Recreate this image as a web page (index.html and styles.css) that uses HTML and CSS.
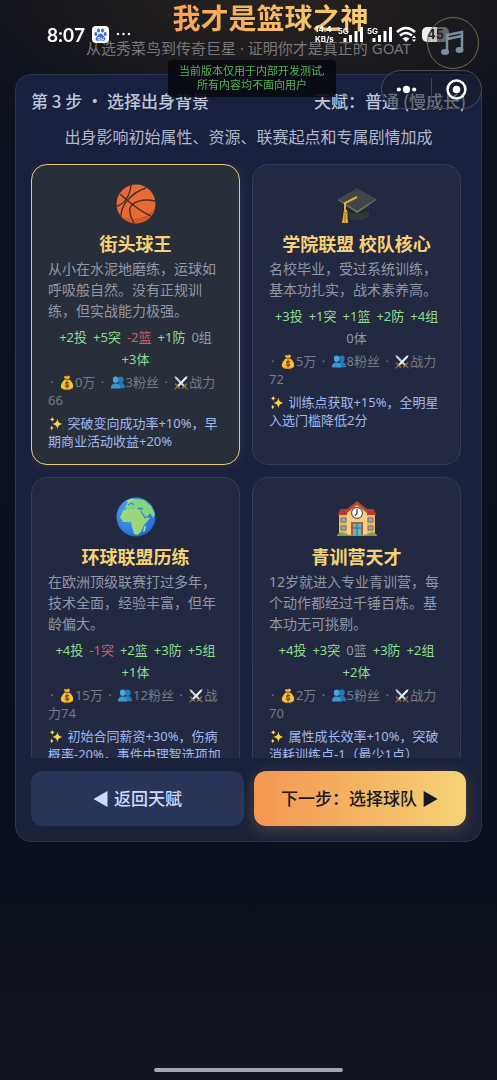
FILE: index.html
```
<!DOCTYPE html>
<html lang="zh-CN">
<head>
    <meta charset="UTF-8">
    <meta name="viewport" content="width=device-width, initial-scale=1.0">
    <title>我才是篮球之神</title>
    <link rel="stylesheet" href="styles.css">
</head>
<body>
    <!-- Shared icons -->
    <svg class="sprite" aria-hidden="true">
        <symbol id="i-money" viewBox="0 0 32 32">
            <path d="M13 9C9 5 9 3 11 2l4 1 4-2 3 2c1 2-1 4-3 6z" fill="#fbb52c"/>
            <path d="M12 9h8c6 4 10 10 9 16-1 5-6 6-13 6S3 30 3 24C3 18 7 13 12 9z" fill="#fcc234"/>
            <path d="M4 26c2 5 20 5 25-1-1 5-6 6-13 6S5 30 4 26z" fill="#e8931c"/>
            <path d="M11 9l10 1" stroke="#8f5b22" stroke-width="2.5" stroke-linecap="round"/>
            <path d="M20 17c-2-2-7-2-7 1s7 2 7 5-6 3-8 0M16 13v15" fill="none" stroke="#69451f" stroke-width="2.2" stroke-linecap="round"/>
        </symbol>
        <symbol id="i-people" viewBox="0 0 32 32">
            <ellipse cx="22" cy="10" rx="6" ry="7" fill="#2579b5"/>
            <path d="M13 28c0-8 3-11 9-11s9 4 9 11z" fill="#2579b5"/>
            <ellipse cx="11" cy="10" rx="6" ry="7" fill="#4aa5df"/>
            <path d="M1 29c0-8 3-11 10-11s10 4 10 11z" fill="#3c96d1"/>
        </symbol>
        <symbol id="i-swords" viewBox="0 0 32 32">
            <path d="M2 2l5 2 19 20-3 3L4 8z" fill="#b9d3dc"/>
            <path d="M30 2l-5 2L6 24l3 3L28 8z" fill="#e5f1f4"/>
            <path d="M4 19l9 9M28 19l-9 9" stroke="#a97c3d" stroke-width="2.5" stroke-linecap="round"/>
            <path d="M8 25l-5 5M24 25l5 5" stroke="#8c6035" stroke-width="3" stroke-linecap="round"/>
        </symbol>
        <symbol id="i-sparkles" viewBox="0 0 32 32">
            <path d="M19 5c1 8 3 10 11 12-8 2-10 4-11 12-1-8-3-10-11-12 8-2 10-4 11-12z" fill="#fdd33c"/>
            <path d="M8 1c.5 4 2 5 6 6-4 1-5.500 2-6 6-.5-4-2-5-6-6 4-1 5.500-2 6-6zM7 20c.5 3 2 5 5 5-3 1-4.500 2-5 6-.5-4-2-5-5-6 3 0 4.500-2 5-5z" fill="#fddd5c"/>
        </symbol>
    </svg>

    <div id="app">
        <header class="page-header">
            <h1>我才是篮球之神</h1>
            <p>从选秀菜鸟到传奇巨星 · 证明你才是真正的 GOAT</p>
        </header>

        <main class="panel">
            <div class="panel-head">
                <h2>第 3 步 · 选择出身背景</h2>
                <span>天赋：普通 (慢成长)</span>
            </div>
            <p class="panel-tip">出身影响初始属性、资源、联赛起点和专属剧情加成</p>

            <div class="card-scroll">
                <button type="button" class="card selected" aria-pressed="true">
                    <svg class="card-icon" viewBox="0 0 40 40" aria-hidden="true">
                        <circle cx="20" cy="20" r="19.500" fill="#e76b35"/>
                        <path d="M5 32a19.500 19.500 0 0 0 34-9C32 34 17 38 5 32z" fill="#d35727"/>
                        <g fill="none" stroke="#43302b" stroke-width="1.400">
                            <path d="M4 10c9 8 19 17 31 22M15 1C14 11 9 20 1 22M30 4C17 8 5 20 5 32M39 17c-12-3-23 1-25 7-1 5 1 10 4 15"/>
                        </g>
                    </svg>
                    <span class="card-name">街头球王</span>
                    <span class="card-desc">从小在水泥地磨练，运球如呼吸般自然。没有正规训练，但实战能力极强。</span>
                    <span class="card-stats">
                        <span class="up">+2投</span> <span class="up">+5突</span> <span class="down">-2篮</span> <span class="up">+1防</span> <span>0组</span> <span class="up">+3体</span>
                    </span>
                    <span class="card-meta"><span class="dot">·</span> <svg class="emoji"><use href="#i-money"/></svg>0万 <span class="dot">·</span> <svg class="emoji"><use href="#i-people"/></svg>3粉丝 <span class="dot">·</span> <svg class="emoji"><use href="#i-swords"/></svg>战力66</span>
                    <span class="card-perk"><svg class="emoji"><use href="#i-sparkles"/></svg> 突破变向成功率+10%，早期商业活动收益+20%</span>
                </button>

                <button type="button" class="card" aria-pressed="false">
                    <svg class="card-icon" viewBox="0 0 40 40" aria-hidden="true">
                        <path d="M10 22v10c5 6 16 6 22 0V18z" fill="#30363a"/>
                        <path d="M10 22c5 5 16 7 22 0v4c-5 5-16 4-22 1z" fill="#222a2e"/>
                        <path d="M1 15L20 4l19 11-19 13z" fill="#414545"/>
                        <path d="M1 15l19 12 19-12v1L20 29 1 16z" fill="#74787a"/>
                        <path d="M20 13L8 19v12" fill="none" stroke="#e6ae32" stroke-width="2"/>
                        <path d="M7 26h3l1 13H5z" fill="#e8ad32"/>
                        <path d="M6 29h5M8 31v8" stroke="#a66d1d"/>
                    </svg>
                    <span class="card-name">学院联盟 校队核心</span>
                    <span class="card-desc">名校毕业，受过系统训练，基本功扎实，战术素养高。</span>
                    <span class="card-stats">
                        <span class="up">+3投</span> <span class="up">+1突</span> <span class="up">+1篮</span> <span class="up">+2防</span> <span class="up">+4组</span> <span>0体</span>
                    </span>
                    <span class="card-meta"><span class="dot">·</span> <svg class="emoji"><use href="#i-money"/></svg>5万 <span class="dot">·</span> <svg class="emoji"><use href="#i-people"/></svg>8粉丝 <span class="dot">·</span> <svg class="emoji"><use href="#i-swords"/></svg>战力72</span>
                    <span class="card-perk"><svg class="emoji"><use href="#i-sparkles"/></svg> 训练点获取+15%，全明星入选门槛降低2分</span>
                </button>

                <button type="button" class="card" aria-pressed="false">
                    <svg class="card-icon" viewBox="0 0 40 40" aria-hidden="true">
                        <defs>
                            <radialGradient id="sea" cx=".4" cy=".35" r=".7">
                                <stop offset="0" stop-color="#58b5f4"/>
                                <stop offset="1" stop-color="#2264d4"/>
                            </radialGradient>
                        </defs>
                        <circle cx="20" cy="20" r="19.500" fill="url(#sea)"/>
                        <path d="M7 14l5-3 8 1 7 2 3 6 4 1-6 7-3 7-4 3-3-1-2-7-1-5-8 0-3-5z" fill="#9bd77a"/>
                        <path d="M9 10l3-5 7-3 9 1 7 6 4 8-2 4-3-5-3 4-4-4-3-4-5 1-2-3-4 3z" fill="#86d47e"/>
                        <path d="M12 8l4-2 2 2M22 11l5 1M25 14l4 7 4-2" fill="none" stroke="#3b87d9" stroke-width="1.300"/>
                        <path d="M28 30l2-2-1 6-2 1zM10 4l5-2 4 0-6 3z" fill="#a9e29b"/>
                    </svg>
                    <span class="card-name">环球联盟历练</span>
                    <span class="card-desc">在欧洲顶级联赛打过多年，技术全面，经验丰富，但年龄偏大。</span>
                    <span class="card-stats">
                        <span class="up">+4投</span> <span class="down">-1突</span> <span class="up">+2篮</span> <span class="up">+3防</span> <span class="up">+5组</span> <span class="up">+1体</span>
                    </span>
                    <span class="card-meta"><span class="dot">·</span> <svg class="emoji"><use href="#i-money"/></svg>15万 <span class="dot">·</span> <svg class="emoji"><use href="#i-people"/></svg>12粉丝 <span class="dot">·</span> <svg class="emoji"><use href="#i-swords"/></svg>战力74</span>
                    <span class="card-perk"><svg class="emoji"><use href="#i-sparkles"/></svg> 初始合同薪资+30%，伤病概率-20%，事件中理智选项加成</span>
                </button>

                <button type="button" class="card" aria-pressed="false">
                    <svg class="card-icon" viewBox="0 0 40 40" aria-hidden="true">
                        <path d="M2 17h36v20H2z" fill="#ecb66a"/>
                        <path d="M3 12h34l2 6H1z" fill="#b93a2d"/>
                        <path d="M10 14L20 6l10 8v24H10z" fill="#f9ce80"/>
                        <path d="M8 14L20 4l12 10-2 2-10-8-10 8z" fill="#c44431"/>
                        <circle cx="20" cy="16" r="5.500" fill="#fff" stroke="#59645f" stroke-width="1.300"/>
                        <path d="M20 12v4l-2 3" fill="none" stroke="#333" stroke-width="1.200"/>
                        <path d="M14 25h12v13H14z" fill="#b05b42"/>
                        <path d="M16 27h8v11h-8z" fill="#65b7c5"/>
                        <path d="M20 27v11M16 31h8" stroke="#376775"/>
                        <path d="M4 21h5v4H4zm27 0h5v4h-5zM4 29h5v4H4zm27 0h5v4h-5z" fill="#74b8c8" stroke="#8a6650"/>
                        <path d="M0 38q3-4 7-2l6 2zm40 0q-3-4-7-2l-6 2z" fill="#74a842"/>
                        <path d="M0 38h40v1H0z" fill="#948779"/>
                    </svg>
                    <span class="card-name">青训营天才</span>
                    <span class="card-desc">12岁就进入专业青训营，每个动作都经过千锤百炼。基本功无可挑剔。</span>
                    <span class="card-stats">
                        <span class="up">+4投</span> <span class="up">+3突</span> <span>0篮</span> <span class="up">+3防</span> <span class="up">+2组</span> <span class="up">+2体</span>
                    </span>
                    <span class="card-meta"><span class="dot">·</span> <svg class="emoji"><use href="#i-money"/></svg>2万 <span class="dot">·</span> <svg class="emoji"><use href="#i-people"/></svg>5粉丝 <span class="dot">·</span> <svg class="emoji"><use href="#i-swords"/></svg>战力70</span>
                    <span class="card-perk"><svg class="emoji"><use href="#i-sparkles"/></svg> 属性成长效率+10%，突破消耗训练点-1（最少1点）</span>
                </button>
            </div>

            <div class="actions">
                <button type="button" class="btn btn-back">◀ 返回天赋</button>
                <button type="button" class="btn btn-next">下一步：选择球队 ▶</button>
            </div>
        </main>
    </div>

    <!-- Phone status bar -->
    <div class="status-bar">
        <div class="status-left">
            <span class="clock">8:07</span>
            <svg class="paw" viewBox="0 0 17 17" aria-hidden="true">
                <rect width="17" height="17" rx="4" fill="#fff"/>
                <g fill="#3a6bd8">
                    <ellipse cx="3.800" cy="8" rx="1.500" ry="2"/>
                    <ellipse cx="6.500" cy="4.500" rx="1.500" ry="2"/>
                    <ellipse cx="10.500" cy="4.500" rx="1.500" ry="2"/>
                    <ellipse cx="13.200" cy="8" rx="1.500" ry="2"/>
                    <path d="M8.500 7.500c2 0 2.500 2 4 3.500 2 2 .5 4-1.500 3.700-1.500-.2-3.500-.2-5 0-2 .3-3.500-1.700-1.500-3.700 1.500-1.500 2-3.500 4-3.500z"/>
                </g>
                <path d="M6 11.500h2v2H6zM9.500 11.500v2h2v-2" fill="none" stroke="#fff" stroke-width=".7"/>
            </svg>
            <svg class="more" viewBox="0 0 15 4" aria-hidden="true"><path d="M2 2h0M7.500 2h0M13 2h0" stroke="#eee" stroke-width="2.500" stroke-linecap="round"/></svg>
        </div>
        <div class="status-right">
            <span class="net-speed">14.4<br>KB/s</span>
            <span class="signal"><b>5G</b><svg viewBox="0 0 20 15" aria-hidden="true"><path d="M2 15v-4M7.500 15V8M13 15V4M18.500 15V0" stroke="#fff" stroke-width="3"/></svg></span>
            <span class="signal"><b>5G</b><svg viewBox="0 0 20 15" aria-hidden="true"><path d="M2 15v-4M7.500 15V8M13 15V4M18.500 15V0" stroke="#fff" stroke-width="3"/></svg></span>
            <svg class="wifi" viewBox="0 0 22 16" aria-hidden="true">
                <path d="M1 6q9-8 18 0M4 9.500q6-5 12 0" fill="none" stroke="#fff" stroke-width="2.600"/>
                <path d="M6.500 12.500q3.500-3 7 0L10 16z" fill="#fff"/>
                <path d="M16 12l2-2.500 2 2.500zM16 13.500l2 2.500 2-2.500z" fill="#fff"/>
            </svg>
            <span class="battery">45</span>
        </div>
    </div>

    <button type="button" class="music-btn" aria-label="音乐">
        <svg viewBox="0 0 24 26" aria-hidden="true">
            <path d="M6 21V5l15-3v17M6 9l15-3" fill="none" stroke="#7890a0" stroke-width="2.500"/>
            <ellipse cx="4" cy="22" rx="4" ry="3" fill="#7890a0"/>
            <ellipse cx="18.500" cy="20" rx="4" ry="3" fill="#7890a0"/>
        </svg>
    </button>

    <div class="notice">当前版本仅用于内部开发测试,<br>所有内容均不面向用户</div>

    <div class="capsule">
        <button type="button" aria-label="更多">
            <svg viewBox="0 0 24 24" aria-hidden="true"><g fill="#fff"><circle cx="4" cy="12" r="2.200"/><circle cx="12" cy="12" r="3.800"/><circle cx="20" cy="12" r="2.200"/></g></svg>
        </button>
        <button type="button" aria-label="关闭">
            <svg viewBox="0 0 24 24" aria-hidden="true"><circle cx="12" cy="12" r="9.300" fill="none" stroke="#fff" stroke-width="2.600"/><circle cx="12" cy="12" r="4" fill="#fff"/></svg>
        </button>
    </div>

    <div class="home-bar"></div>
</body>
</html>
```
FILE: styles.css
```
* {
    box-sizing: border-box;
}

body {
    font-family: "Noto Sans", "Noto Sans CJK SC", sans-serif;
    margin: 0;
    min-height: 100vh;
    color: #c4cbe0;
    background: radial-gradient(ellipse 60% 140px at 55% 0, #29221f, transparent),
        linear-gradient(#12141c, #0c1220 15%, #0b101e 80%, #11151f);
}

h1, h2, p {
    margin: 0;
}

button {
    font-family: inherit;
    cursor: pointer;
}

.sprite {
    position: absolute;
    width: 0;
    height: 0;
}

#app {
    padding: 0 15px 20px;
}

.page-header {
    text-align: center;
    padding-bottom: 14px;
}

.page-header h1 {
    width: fit-content;
    margin: 0 auto;
    padding-left: 44px;
    font-size: 28px;
    font-weight: 700;
    line-height: 36px;
    background: linear-gradient(90deg, #f79a50, #f5cf70);
    -webkit-background-clip: text;
    background-clip: text;
    color: transparent;
}

.page-header p {
    font-size: 15px;
    line-height: 24px;
    color: #77777d;
}

/* Main panel */
.panel {
    padding: 15px;
    border: 1px solid #2a3453;
    border-radius: 16px;
    background: linear-gradient(#19203f, #1a223a);
}

.panel-head {
    display: flex;
    justify-content: space-between;
    font-family: "Noto Sans CJK SC", sans-serif;
    font-size: 17px;
    line-height: 22px;
    font-weight: 500;
    color: #bdc5d9;
}

.panel-head h2 {
    font-size: 17px;
    font-weight: 500;
}

.panel-tip {
    margin: 13px 0 15px;
    font-size: 16px;
    line-height: 24px;
    text-align: center;
    color: #b0b7ca;
}

.card-scroll {
    display: grid;
    grid-template-columns: 1fr 1fr;
    gap: 12px;
    max-height: 55vh;
    padding-right: 5px;
    overflow-y: auto;
    scrollbar-width: none;
}

.card {
    display: flex;
    flex-direction: column;
    justify-content: flex-start;
    padding: 16px 16px 14px;
    border: 1px solid #343b54;
    border-radius: 16px;
    background: #222941;
    text-align: left;
    color: #9297a5;
}

.card.selected {
    border-color: #e5cb72;
    background: #292e3b;
    box-shadow: 0 0 12px rgba(245, 205, 110, 0.1);
}

.card-icon {
    align-self: center;
    width: 40px;
    height: 40px;
    margin: 3px 0 7px;
}

.card-name {
    font-size: 18px;
    font-weight: 700;
    line-height: 26px;
    text-align: center;
    color: #f6d275;
}

.card-desc {
    margin-top: 1px;
    font-size: 14px;
    line-height: 21px;
}

.card-stats {
    display: flex;
    flex-wrap: wrap;
    justify-content: center;
    column-gap: 6px;
    margin-top: 5px;
    font-size: 13px;
    line-height: 22px;
}

.card-stats .up {
    color: #8ddd91;
}

.card-stats .down {
    color: #d45c67;
}

.card-meta {
    margin-top: 3px;
    font-size: 13px;
    line-height: 18px;
    color: #777b86;
}

.card-meta .dot {
    margin: 0 2px;
}

.card-perk {
    margin-top: 5px;
    font-size: 13px;
    line-height: 18px;
    color: #a0b8ee;
}

.emoji {
    width: 16px;
    height: 15px;
    vertical-align: -3px;
}

/* Bottom buttons */
.actions {
    display: grid;
    grid-template-columns: 1fr 1fr;
    gap: 10px;
    margin-top: 13px;
}

.btn {
    padding: 15px 0;
    border: none;
    border-radius: 12px;
    font-size: 17px;
    font-weight: 500;
    line-height: 25px;
}

.btn-back {
    background: #283558;
    color: #cddaff;
}

.btn-next {
    background: linear-gradient(90deg, #f39652, #f6d276);
    color: #17191f;
    box-shadow: 0 4px 14px rgba(244, 155, 82, 0.25);
}

/* Status bar over the page */
.status-bar {
    position: fixed;
    top: 22px;
    left: 0;
    right: 0;
    display: flex;
    justify-content: space-between;
    align-items: center;
    height: 24px;
    padding: 0 48px 0 47px;
    color: #fff;
    pointer-events: none;
}

.status-left,
.status-right {
    display: flex;
    align-items: center;
}

.status-left {
    gap: 7px;
}

.status-right {
    gap: 4px;
}

.clock {
    font-family: Lato, sans-serif;
    font-size: 19px;
    font-weight: 700;
}

.paw {
    width: 17px;
    height: 17px;
}

.more {
    width: 15px;
    height: 4px;
}

.net-speed {
    font-family: Inter, sans-serif;
    font-size: 8px;
    font-weight: 700;
    line-height: 10px;
}

.signal {
    display: flex;
    align-items: flex-start;
}

.signal b {
    font-family: Inter, sans-serif;
    font-size: 8px;
    line-height: 8px;
    margin-right: -6px;
}

.signal svg {
    width: 20px;
    height: 15px;
}

.wifi {
    width: 22px;
    height: 16px;
}

.battery {
    width: 27px;
    border-radius: 5px;
    background: linear-gradient(90deg, #eee 55%, #77777a 55%);
    font-family: Inter, sans-serif;
    font-size: 13px;
    font-weight: 700;
    line-height: 15px;
    text-align: center;
    color: #222;
}

.music-btn {
    position: fixed;
    top: 17px;
    right: 18px;
    display: flex;
    align-items: center;
    justify-content: center;
    width: 52px;
    height: 52px;
    padding: 0;
    border: 1px solid #746750;
    border-radius: 50%;
    background: rgba(30, 32, 40, 0.2);
}

.music-btn svg {
    width: 24px;
    height: 26px;
}

.notice {
    position: fixed;
    top: 60px;
    left: 168px;
    padding: 4px 11px 5px;
    border-radius: 4px;
    background: rgba(9, 10, 17, 0.9);
    font-size: 11px;
    line-height: 14px;
    text-align: center;
    color: #57b55a;
}

.capsule {
    position: fixed;
    top: 70px;
    right: 15px;
    display: flex;
    width: 101px;
    height: 39px;
    padding: 7px 0;
    border: 1px solid #494c58;
    border-radius: 20px;
    background: rgba(20, 23, 36, 0.5);
}

.capsule button {
    flex: 1;
    padding: 0;
    border: none;
    background: none;
}

.capsule button + button {
    border-left: 1px solid #41444f;
}

.capsule svg {
    display: block;
    width: 23px;
    height: 23px;
    margin: 0 auto;
}

.home-bar {
    position: fixed;
    bottom: 8px;
    left: 31%;
    right: 31%;
    height: 4px;
    border-radius: 2px;
    background: #a5a8ae;
}
```
